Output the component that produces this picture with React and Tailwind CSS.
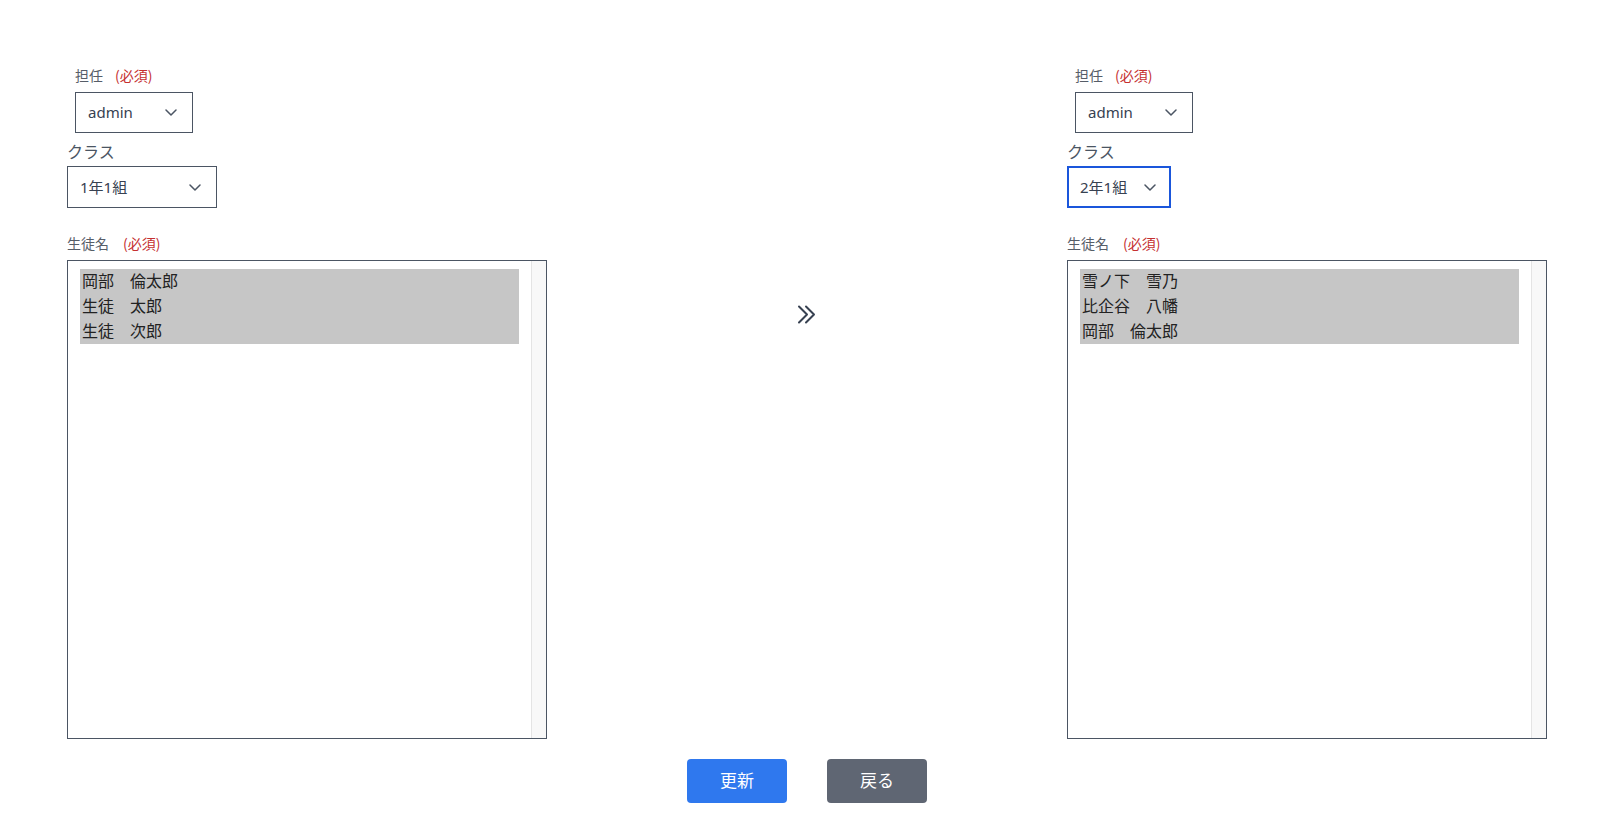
import React from 'react'

const Chevron = () => (
  <svg width="12" height="7" viewBox="0 0 12 7" fill="none" stroke="#4b5563" strokeWidth="1.5" strokeLinecap="round" strokeLinejoin="round">
    <path d="M1 1l5 5 5-5" />
  </svg>
)

const Label = ({ text, gap }) => (
  <div className="h-5 leading-5 text-sm text-[#565d68] font-['Noto_Sans_CJK_JP',sans-serif]">
    {text}
    <span className={`${gap} text-[#c53030]`}>(必須)</span>
  </div>
)

const Select = ({ value, className }) => (
  <div className={`flex items-center justify-between text-[15px] text-[#374151] ${className}`}>
    <span>{value}</span>
    <Chevron />
  </div>
)

const ListBox = ({ items }) => (
  <div className="mt-[7px] h-[479px] border border-[#4b5563] flex">
    <div className="flex-1 px-3 pt-2">
      {items.map((name) => (
        <div key={name} className="h-[25px] leading-[25px] px-[2px] text-base text-[#222] bg-[#c6c6c6]">
          {name}
        </div>
      ))}
    </div>
    <div className="w-[15px] bg-[#f8f8f8] border-l border-[#e4e4e4]"></div>
  </div>
)

const Column = ({ klass, focused, items }) => (
  <div className="w-[480px]">
    <div className="pl-2">
      <Label text="担任" gap="ml-3" />
      <Select value="admin" className="mt-[7px] h-[41px] w-[118px] border border-[#4b5563] pl-3 pr-[15px]" />
    </div>
    <div className="mt-[7px] h-6 leading-6 text-base text-[#4b5563]">クラス</div>
    {focused ? (
      <Select value={klass} className="mt-[2px] h-[42px] w-[104px] border-2 border-[#1a56db] pl-[11px] pr-[13px]" />
    ) : (
      <Select value={klass} className="mt-[2px] h-[42px] w-[150px] border border-[#4b5563] pl-3 pr-[15px]" />
    )}
    <div className="mt-[25px]">
      <Label text="生徒名" gap="ml-[14px]" />
    </div>
    <ListBox items={items} />
  </div>
)

export default function App() {
  return (
    <div className="min-h-screen bg-white font-['Noto_Sans','Noto_Sans_CJK_JP',sans-serif]">
      <div className="flex pt-[65px] pl-[67px] pr-[62px]">
        <Column klass="1年1組" items={['岡部　倫太郎', '生徒　太郎', '生徒　次郎']} />
        <div className="flex-1 flex justify-center pt-[240px]">
          <svg width="20" height="19" viewBox="0 0 20 19" fill="none" stroke="#374151" strokeWidth="2" strokeLinecap="round" strokeLinejoin="round">
            <path d="M2 1.5l8 8-8 8M9 1.5l8 8-8 8" />
          </svg>
        </div>
        <Column klass="2年1組" focused items={['雪ノ下　雪乃', '比企谷　八幡', '岡部　倫太郎']} />
      </div>
      <div className="mt-5 flex justify-center gap-10 pl-[5px]">
        <button className="w-[100px] h-[44px] rounded bg-[#2f78ee] text-white text-[17px]">更新</button>
        <button className="w-[100px] h-[44px] rounded bg-[#5f6673] text-white text-[17px]">戻る</button>
      </div>
    </div>
  )
}
